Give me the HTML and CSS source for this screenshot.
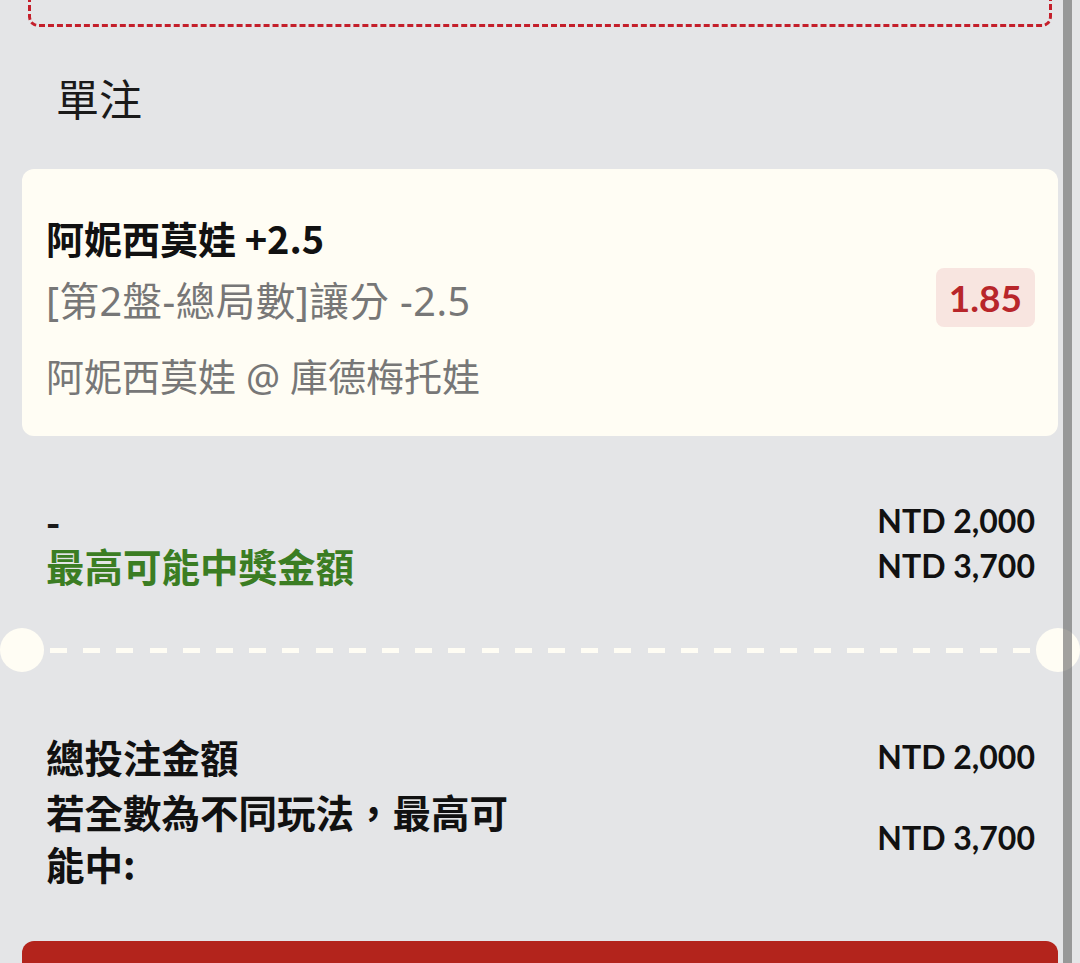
FILE: index.html
```html
<!DOCTYPE html>
<html lang="zh-Hant">
  <head>
    <meta charset="UTF-8" />
    <meta name="viewport" content="width=device-width, initial-scale=1.0" />
    <title>單注</title>
    <link rel="stylesheet" href="styles.css">
  </head>
  <body>
    <div class="page">
      <div class="prev-box"></div>

      <h2 class="section-title">單注</h2>

      <div class="bet-card">
        <div class="bet-info">
          <div class="bet-pick">阿妮西莫娃 +2.5</div>
          <div class="bet-market">[第2盤-總局數]讓分 -2.5</div>
          <div class="bet-match">阿妮西莫娃 @ 庫德梅托娃</div>
        </div>
        <div class="odds">1.85</div>
      </div>

      <div class="amounts">
        <div class="amount-row">
          <span class="amount-label">-</span>
          <span class="amount-value">NTD 2,000</span>
        </div>
        <div class="amount-row">
          <span class="amount-label win">最高可能中獎金額</span>
          <span class="amount-value">NTD 3,700</span>
        </div>
      </div>

      <div class="ticket-cut">
        <span class="notch"></span>
        <span class="cut-line"></span>
        <span class="notch"></span>
      </div>

      <div class="totals">
        <div class="total-row">
          <span class="total-label">總投注金額</span>
          <span class="amount-value">NTD 2,000</span>
        </div>
        <div class="total-row">
          <span class="total-label">若全數為不同玩法，最高可能中:</span>
          <span class="amount-value">NTD 3,700</span>
        </div>
      </div>

      <button class="place-bet" type="button"></button>
    </div>
    <div class="scroll-thumb"></div>
  </body>
</html>
```

FILE: styles.css
```css
body {
  font-family: "Noto Sans CJK TC", "Noto Sans", sans-serif;
  background-color: #e4e5e7;
  color: #1a1a1a;
  margin: 0;
  padding: 0;
  min-height: 100vh;
  position: relative;
  overflow: hidden;
}
.page {
  padding: 0 22px;
}
.prev-box {
  box-sizing: border-box;
  height: 39px;
  margin: -12px 6px 0;
  border: 3px dashed #c41f2b;
  border-radius: 10px;
}
.section-title {
  margin: 40px 0 0 34px;
  font-size: 43px;
  font-weight: 400;
  line-height: 60px;
  color: #1a1a1a;
}
.bet-card {
  margin-top: 42px;
  height: 267px;
  box-sizing: border-box;
  padding: 39px 23px 0 24px;
  background-color: #fffdf4;
  border-radius: 12px;
  display: flex;
  justify-content: space-between;
}
.bet-info {
  display: flex;
  flex-direction: column;
}
.bet-pick {
  font-size: 38px;
  font-weight: 700;
  line-height: 60px;
  color: #111;
}
.bet-market,
.bet-match {
  font-family: "Noto Sans", "Noto Sans CJK TC", sans-serif;
  line-height: 66px;
  color: #777;
}
.bet-market {
  font-size: 39.5px;
  letter-spacing: 0.5px;
}
.bet-match {
  margin-top: 9px;
  font-size: 38px;
}
.odds {
  align-self: center;
  margin-top: -49px;
  padding: 0 13px;
  height: 59px;
  line-height: 59px;
  font-family: Lato, sans-serif;
  font-size: 37px;
  font-weight: 700;
  color: #b8262a;
  background-color: #f8e5e0;
  border-radius: 8px;
}
.amounts {
  margin-top: 62px;
  padding: 0 23px 0 24px;
}
.amount-row,
.total-row {
  display: flex;
  justify-content: space-between;
  align-items: center;
}
.amount-row {
  height: 45px;
}
.amount-label {
  font-size: 38.5px;
  font-weight: 700;
  line-height: 45px;
}
.amount-label.win {
  color: #3b7d23;
}
.amount-value {
  font-family: Lato, sans-serif;
  font-size: 32px;
  font-weight: 700;
  color: #111;
}
.ticket-cut {
  margin: 40px -22px 0;
  display: flex;
  align-items: center;
}
.notch {
  flex-shrink: 0;
  width: 44px;
  height: 44px;
  border-radius: 50%;
  background-color: #fffdf4;
}
.cut-line {
  flex: 1;
  height: 5px;
  margin: 0 6px;
  background-image: repeating-linear-gradient(to right, #fffdf4 0 17px, transparent 17px 33.2px);
}
.totals {
  margin-top: 58px;
  padding: 0 23px 0 24px;
  display: flex;
  flex-direction: column;
  gap: 3px;
}
.total-label {
  max-width: 480px;
  font-size: 38.5px;
  font-weight: 700;
  line-height: 52px;
  color: #111;
}
.place-bet {
  display: block;
  width: 100%;
  height: 120px;
  margin-top: 52px;
  border: none;
  border-radius: 12px;
  background-color: #b3241c;
}
.scroll-thumb {
  position: absolute;
  top: 0;
  bottom: 0;
  right: 8px;
  width: 9px;
  background-color: rgba(100, 100, 100, 0.6);
}
```
